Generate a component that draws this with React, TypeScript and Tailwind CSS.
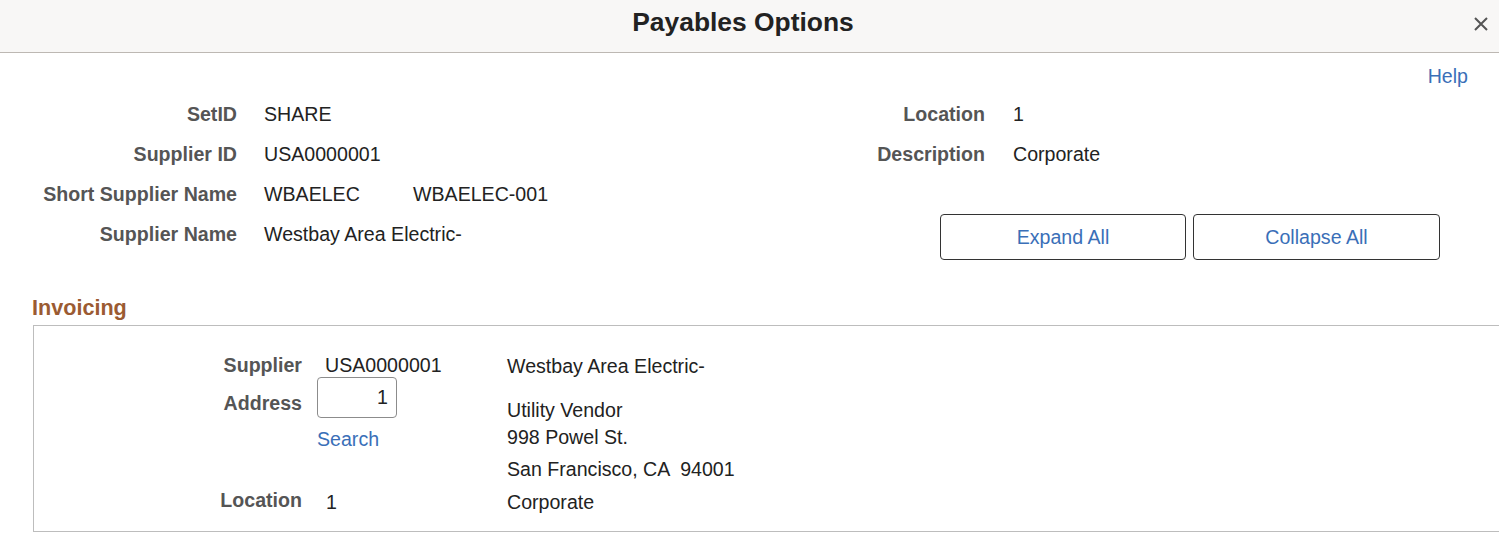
const font = { fontFamily: '"Liberation Sans", Arial, sans-serif' };

function Row({ label, children }: { label: string; children: React.ReactNode }) {
  return (
    <>
      <div className="h-[40px] flex items-center justify-end font-bold text-[#555555]">{label}</div>
      <div className="h-[40px] flex items-center text-[#222222]">{children}</div>
    </>
  );
}

export default function App() {
  return (
    <div className="w-[1499px] h-[539px] overflow-hidden bg-white text-[19.6px] leading-[24px]" style={font}>
      {/* Header */}
      <div className="relative h-[53px] bg-[#f8f7f6] border-b border-[#bdb8b3] flex justify-center pt-[6px] pr-[13px]">
        <h1 className="text-[26.4px] leading-[32px] font-bold text-[#222222]">Payables Options</h1>
        <button className="absolute left-[1474px] top-[17px] text-[#555555]" aria-label="Close">
          <svg width="14" height="14" viewBox="0 0 14 14" fill="none" stroke="currentColor" strokeWidth="2">
            <path d="M1 1L13 13M13 1L1 13" />
          </svg>
        </button>
      </div>

      {/* Help */}
      <div className="h-[41px] flex justify-end pr-[31px] pt-[11px]">
        <a href="#" className="text-[#3a6fb8]">Help</a>
      </div>

      {/* Top fields */}
      <div className="flex items-start h-[165px]">
        <div className="w-[820px] pl-[20px] grid grid-cols-[217px_auto] gap-x-[27px]">
          <Row label="SetID">SHARE</Row>
          <Row label="Supplier ID">USA0000001</Row>
          <Row label="Short Supplier Name">
            <span className="w-[149px]">WBAELEC</span>
            <span>WBAELEC-001</span>
          </Row>
          <Row label="Supplier Name">Westbay Area Electric-</Row>
        </div>
        <div className="flex flex-col">
          <div className="grid grid-cols-[145px_auto] gap-x-[28px] pl-[20px]">
            <Row label="Location">1</Row>
            <Row label="Description">Corporate</Row>
          </div>
          <div className="flex gap-[7px] ml-[120px] mt-[40px]">
            <button className="w-[246px] h-[46px] border border-[#333333] rounded-[4px] text-[#3a6fb8]">Expand All</button>
            <button className="w-[247px] h-[46px] border border-[#333333] rounded-[4px] text-[#3a6fb8]">Collapse All</button>
          </div>
        </div>
      </div>

      {/* Invoicing */}
      <h2 className="mt-[37px] ml-[32px] text-[21.6px] leading-[24px] font-bold text-[#9b5b32]">Invoicing</h2>
      <div className="mt-[5px] ml-[33px] w-[1480px] h-[207px] border border-[#bdbdbd] flex">
        {/* Labels */}
        <div className="w-[268px] flex flex-col items-end pt-[27px] font-bold text-[#555555]">
          <div>Supplier</div>
          <div className="mt-[14px]">Address</div>
          <div className="mt-[73px]">Location</div>
        </div>
        {/* Values */}
        <div className="w-[190px] ml-[15px] flex flex-col items-start pt-[27px] text-[#222222]">
          <div className="pl-[8px]">USA0000001</div>
          <input
            readOnly
            value="1"
            className="w-[80px] h-[41px] border border-[#8c8c8c] rounded-[4px] text-right pr-[8px] text-[#222222]"
          />
          <a href="#" className="mt-[9px] text-[#3a6fb8]">Search</a>
          <div className="mt-[39px] pl-[9px]">1</div>
        </div>
        {/* Address */}
        <div className="flex flex-col pt-[28px] text-[#222222]">
          <div>Westbay Area Electric-</div>
          <div className="mt-[20px]">Utility Vendor</div>
          <div className="mt-[3px]">998 Powel St.</div>
          <div className="mt-[8px] whitespace-pre">San Francisco, CA  94001</div>
          <div className="mt-[9px]">Corporate</div>
        </div>
      </div>
    </div>
  );
}
